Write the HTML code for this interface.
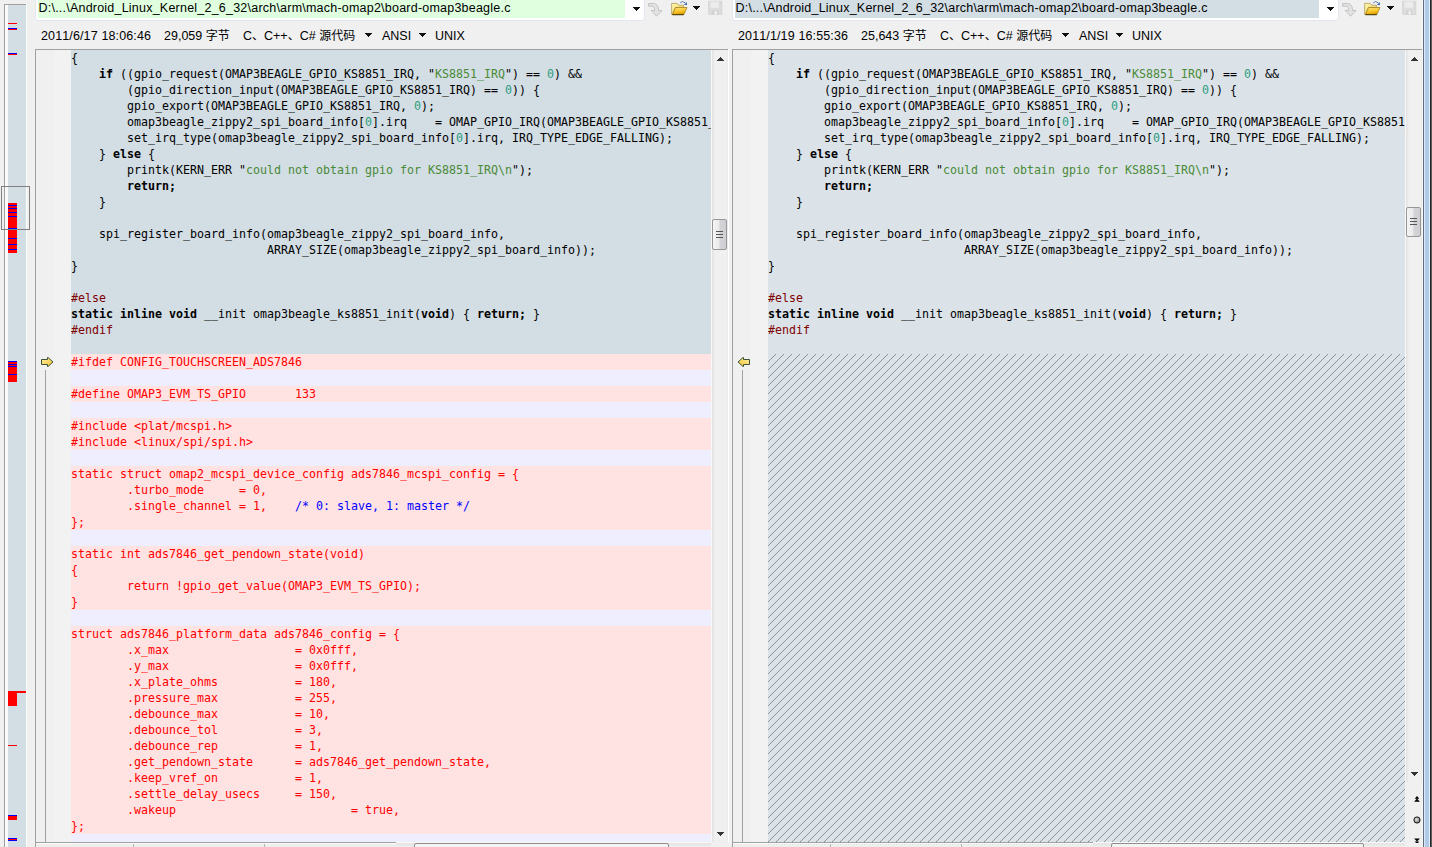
<!DOCTYPE html>
<html lang="zh-CN">
<head>
<meta charset="utf-8">
<title>board-omap3beagle.c</title>
<style>
html,body{margin:0;padding:0}
body{width:1432px;height:847px;overflow:hidden;background:#f0f0f0;position:relative;
  font-family:"Liberation Sans","Noto Sans CJK SC",sans-serif;font-size:12px;color:#000}
.abs{position:absolute}
/* ---------- overview strip ---------- */
#ov{left:4px;top:4px;width:23px;height:843px}
#ov .bl{left:0;top:0;width:1px;height:843px;background:#a0a0a0}
#ov .bt{left:0;top:0;width:22px;height:1px;background:#a0a0a0}
#ov .wh{left:1px;top:1px;width:3px;height:842px;background:#fafafa}
#ov .bg{left:4px;top:1px;width:18px;height:842px;background:#d2dde4}
#ov .wr{left:22px;top:0;width:1px;height:843px;background:#fcfcfc}
.m{position:absolute;left:8px;width:9px}
.red{background:#ff0000}.blu{background:#0000ff}
#vp{left:1px;top:186px;width:27px;height:42px;border:1px solid #808080}
/* ---------- header ---------- */
.pbox{top:-1px;height:20px;background:#fff;border:1px solid #e3e6ef;border-radius:0 0 3px 3px}
.phl{top:0;height:18px}
.ptxt{top:0;height:16px;line-height:16px;white-space:pre;font-size:12.5px;letter-spacing:0.22px;font-kerning:none}
.tri{width:0;height:0;border-left:3.8px solid transparent;border-right:3.8px solid transparent;border-top:4.4px solid #000;margin-left:-0.4px}
.info{top:28px;height:16px;line-height:16px;white-space:pre;font-size:12.5px;font-kerning:none}
.info u{text-decoration:none;font-size:12px}
/* ---------- panes ---------- */
.pane{top:49px;height:794px;overflow:hidden}
.pane .bt{left:0;top:0;height:1px;background:#a0a0a0}
.pane .bl{left:0;top:0;width:1px;height:794px;background:#a0a0a0}
.pane .bb{left:0;top:793px;height:1px;background:#a0a0a0}
.gut{left:1px;top:1px;width:35px;height:792px;background:linear-gradient(90deg,#f0f0f0 0,#f0f0f0 18px,#f2f2f2 18px,#f2f2f2 100%)}
.vline{width:1px;background:#a0a0a0}
.code{left:36px;top:1px;height:792px;overflow:hidden;background:#d2dde4;
  font-family:"DejaVu Sans Mono","Liberation Mono",monospace;font-size:11.64px;line-height:16px;color:#000}
.r{height:16px;white-space:pre;padding-top:0}
.r.d{background:#ffe3e3;color:#ff0000}
.r.l{background:#eeeeff}
.r b{font-weight:bold}
.n{color:#2e9e80}.s{color:#4a8a38}.p{color:#800000}.c{color:#0000ff}
.hatch{background-color:#dbe3e8;background-image:repeating-linear-gradient(135deg,transparent 0,transparent 4.95px,#8a949c 4.95px,#8a949c 5.66px)}
.sb{top:1px;width:17px;background:linear-gradient(90deg,#f8f8f8 0,#f8f8f8 1px,#e3e3e3 1px,#e3e3e3 2px,#e9e9e9 2px,#e9e9e9 3px,#eeeeee 3px,#eeeeee 4px,#f0f0f0 4px,#f0f0f0 16px,#ebebeb 16px,#ebebeb 17px)}
.thumb{left:1px;width:13px;border:1px solid #979797;border-radius:2px;background:linear-gradient(90deg,#f5f5f5 0,#e9e9eb 48%,#d4d4d8 52%,#cfcfd3 100%)}
.thumb i{position:absolute;left:3px;width:7px;height:1px;background:#555}
.up{width:0;height:0;border-left:4px solid transparent;border-right:4px solid transparent;border-bottom:4.5px solid #383838;margin-left:-0.5px}
.dn{width:0;height:0;border-left:4px solid transparent;border-right:4px solid transparent;border-top:4.5px solid #383838;margin-left:-0.5px}
</style>
</head>
<body>

<!-- overview strip -->
<div id="ov" class="abs">
  <div class="abs bg"></div><div class="abs wh"></div>
  <div class="abs bl"></div><div class="abs bt"></div><div class="abs wr"></div>
</div>
<div class="m red" style="top:23px;height:1px"></div>
<div class="m blu" style="top:28px;height:1px"></div><div class="m red" style="top:29px;height:1px"></div>
<div class="m blu" style="top:53px;height:1px"></div><div class="m red" style="top:54px;height:1px"></div>
<div class="m red" style="top:203px;height:50px"></div>
<div class="m blu" style="top:205px;height:1px"></div>
<div class="m blu" style="top:208px;height:1px"></div>
<div class="m blu" style="top:212px;height:1px"></div>
<div class="m blu" style="top:216px;height:1px"></div>
<div class="m blu" style="top:228px;height:1px"></div>
<div class="m blu" style="top:238px;height:1px"></div>
<div class="m blu" style="top:244px;height:1px"></div>
<div class="m blu" style="top:249px;height:1px"></div>
<div class="m red" style="top:361px;height:21px"></div>
<div class="m blu" style="top:361px;height:1px"></div>
<div class="m blu" style="top:364px;height:1px"></div>
<div class="m blu" style="top:366px;height:1px"></div>
<div class="m blu" style="top:374px;height:1px"></div>
<div class="m red" style="top:691px;height:15px"></div>
<div class="m red" style="top:691px;height:2px;width:18px"></div>
<div class="m red" style="top:745px;height:1px"></div>
<div class="m blu" style="top:815px;height:1px"></div><div class="m red" style="top:816px;height:4px"></div>
<div class="m blu" style="top:838px;height:1px"></div><div class="m red" style="top:839px;height:1px"></div><div class="m blu" style="top:840px;height:1px"></div>
<div id="vp" class="abs"></div>

<!-- left header -->
<div class="abs pbox" style="left:35px;width:608px"></div>
<div class="abs phl" style="left:38px;width:587px;background:#dfffdf"></div>
<div class="abs ptxt" id="pl" style="left:38.5px">D:\...\Android_Linux_Kernel_2_6_32\arch\arm\mach-omap2\board-omap3beagle.c</div>
<svg class="abs" style="left:633px;top:7px" width="7" height="4" fill="#111"><use href="#tdn"/></svg>
<svg class="abs" style="left:693px;top:6px" width="7" height="4" fill="#111"><use href="#tdn"/></svg>
<div class="abs info" style="left:41px;letter-spacing:0.13px" id="il1">2011/6/17 18:06:46</div>
<div class="abs info" style="left:164px" id="il2">29,059 <u>字节</u></div>
<div class="abs info" style="left:243px" id="il3">C<u>、</u>C++<u>、</u>C# <u>源代码</u></div>
<svg class="abs" style="left:365px;top:33px" width="7" height="4" fill="#111"><use href="#tdn"/></svg>
<div class="abs info" style="left:382px" id="il4">ANSI</div>
<svg class="abs" style="left:419px;top:33px" width="7" height="4" fill="#111"><use href="#tdn"/></svg>
<div class="abs info" style="left:435px" id="il5">UNIX</div>

<!-- right header -->
<div class="abs pbox" style="left:732px;width:605px"></div>
<div class="abs phl" style="left:735px;width:584px;background:#d2dde4"></div>
<div class="abs ptxt" id="pr" style="left:735.5px">D:\...\Android_Linux_Kernel_2_6_32\arch\arm\mach-omap2\board-omap3beagle.c</div>
<svg class="abs" style="left:1327px;top:7px" width="7" height="4" fill="#111"><use href="#tdn"/></svg>
<svg class="abs" style="left:1387px;top:6px" width="7" height="4" fill="#111"><use href="#tdn"/></svg>
<div class="abs info" style="left:738px;letter-spacing:0.13px" id="ir1">2011/1/19 16:55:36</div>
<div class="abs info" style="left:861px" id="ir2">25,643 <u>字节</u></div>
<div class="abs info" style="left:940px" id="ir3">C<u>、</u>C++<u>、</u>C# <u>源代码</u></div>
<svg class="abs" style="left:1062px;top:33px" width="7" height="4" fill="#111"><use href="#tdn"/></svg>
<div class="abs info" style="left:1079px" id="ir4">ANSI</div>
<svg class="abs" style="left:1116px;top:33px" width="7" height="4" fill="#111"><use href="#tdn"/></svg>
<div class="abs info" style="left:1132px" id="ir5">UNIX</div>

<!-- left pane -->
<div class="abs pane" style="left:35px;width:693px">
  <div class="abs gut"></div>
  <div class="abs code" style="width:640px">
<div class="r">{</div>
<div class="r">    <b>if</b> ((gpio_request(OMAP3BEAGLE_GPIO_KS8851_IRQ, "<span class="s">KS8851_IRQ</span>") == <span class="n">0</span>) &amp;&amp;</div>
<div class="r">        (gpio_direction_input(OMAP3BEAGLE_GPIO_KS8851_IRQ) == <span class="n">0</span>)) {</div>
<div class="r">        gpio_export(OMAP3BEAGLE_GPIO_KS8851_IRQ, <span class="n">0</span>);</div>
<div class="r">        omap3beagle_zippy2_spi_board_info[<span class="n">0</span>].irq    = OMAP_GPIO_IRQ(OMAP3BEAGLE_GPIO_KS8851_IRQ);</div>
<div class="r">        set_irq_type(omap3beagle_zippy2_spi_board_info[<span class="n">0</span>].irq, IRQ_TYPE_EDGE_FALLING);</div>
<div class="r">    } <b>else</b> {</div>
<div class="r">        printk(KERN_ERR "<span class="s">could not obtain gpio for KS8851_IRQ\n</span>");</div>
<div class="r">        <b>return</b><b>;</b></div>
<div class="r">    }</div>
<div class="r"></div>
<div class="r">    spi_register_board_info(omap3beagle_zippy2_spi_board_info,</div>
<div class="r">                            ARRAY_SIZE(omap3beagle_zippy2_spi_board_info));</div>
<div class="r">}</div>
<div class="r"></div>
<div class="r"><span class="p">#else</span></div>
<div class="r"><b>static inline void</b> __init omap3beagle_ks8851_init(<b>void</b>) { <b>return</b><b>;</b> }</div>
<div class="r"><span class="p">#endif</span></div>
<div class="r"></div>
<div class="r d">#ifdef CONFIG_TOUCHSCREEN_ADS7846</div>
<div class="r l"></div>
<div class="r d">#define OMAP3_EVM_TS_GPIO       133</div>
<div class="r l"></div>
<div class="r d">#include &lt;plat/mcspi.h&gt;</div>
<div class="r d">#include &lt;linux/spi/spi.h&gt;</div>
<div class="r l"></div>
<div class="r d">static struct omap2_mcspi_device_config ads7846_mcspi_config = {</div>
<div class="r d">        .turbo_mode     = 0,</div>
<div class="r d">        .single_channel = 1,    <span class="c">/* 0: slave, 1: master */</span></div>
<div class="r d">};</div>
<div class="r l"></div>
<div class="r d">static int ads7846_get_pendown_state(void)</div>
<div class="r d">{</div>
<div class="r d">        return !gpio_get_value(OMAP3_EVM_TS_GPIO);</div>
<div class="r d">}</div>
<div class="r l"></div>
<div class="r d">struct ads7846_platform_data ads7846_config = {</div>
<div class="r d">        .x_max                  = 0x0fff,</div>
<div class="r d">        .y_max                  = 0x0fff,</div>
<div class="r d">        .x_plate_ohms           = 180,</div>
<div class="r d">        .pressure_max           = 255,</div>
<div class="r d">        .debounce_max           = 10,</div>
<div class="r d">        .debounce_tol           = 3,</div>
<div class="r d">        .debounce_rep           = 1,</div>
<div class="r d">        .get_pendown_state      = ads7846_get_pendown_state,</div>
<div class="r d">        .keep_vref_on           = 1,</div>
<div class="r d">        .settle_delay_usecs     = 150,</div>
<div class="r d">        .wakeup                         = true,</div>
<div class="r d">};</div>
<div class="r l"></div>
  </div>
  <div class="abs vline" style="left:10px;top:321px;height:472px"></div>
  <div class="abs sb" style="left:676px;height:792px">
    <svg class="abs" style="left:6px;top:7px" width="7" height="4" fill="#333"><use href="#tup"/></svg>
    <div class="abs thumb" style="top:169px;height:29px"><i style="top:11px"></i><i style="top:14px"></i><i style="top:17px"></i></div>
    <svg class="abs" style="left:6px;top:782px" width="7" height="4" fill="#333"><use href="#tdn"/></svg>
  </div>
  <div class="abs bt" style="width:693px"></div><div class="abs bl"></div><div class="abs bb" style="width:361px"></div>
</div>

<!-- right pane -->
<div class="abs pane" style="left:732px;width:690px">
  <div class="abs gut"></div>
  <div class="abs code" style="width:637px;background:#dbe3e8">
<div class="r">{</div>
<div class="r">    <b>if</b> ((gpio_request(OMAP3BEAGLE_GPIO_KS8851_IRQ, "<span class="s">KS8851_IRQ</span>") == <span class="n">0</span>) &amp;&amp;</div>
<div class="r">        (gpio_direction_input(OMAP3BEAGLE_GPIO_KS8851_IRQ) == <span class="n">0</span>)) {</div>
<div class="r">        gpio_export(OMAP3BEAGLE_GPIO_KS8851_IRQ, <span class="n">0</span>);</div>
<div class="r">        omap3beagle_zippy2_spi_board_info[<span class="n">0</span>].irq    = OMAP_GPIO_IRQ(OMAP3BEAGLE_GPIO_KS8851_IRQ);</div>
<div class="r">        set_irq_type(omap3beagle_zippy2_spi_board_info[<span class="n">0</span>].irq, IRQ_TYPE_EDGE_FALLING);</div>
<div class="r">    } <b>else</b> {</div>
<div class="r">        printk(KERN_ERR "<span class="s">could not obtain gpio for KS8851_IRQ\n</span>");</div>
<div class="r">        <b>return</b><b>;</b></div>
<div class="r">    }</div>
<div class="r"></div>
<div class="r">    spi_register_board_info(omap3beagle_zippy2_spi_board_info,</div>
<div class="r">                            ARRAY_SIZE(omap3beagle_zippy2_spi_board_info));</div>
<div class="r">}</div>
<div class="r"></div>
<div class="r"><span class="p">#else</span></div>
<div class="r"><b>static inline void</b> __init omap3beagle_ks8851_init(<b>void</b>) { <b>return</b><b>;</b> }</div>
<div class="r"><span class="p">#endif</span></div>
<div class="r"></div>
<div class="hatch" style="height:488px"></div>
  </div>
  <div class="abs vline" style="left:10px;top:321px;height:472px"></div>
  <div class="abs sb" style="left:673px;height:732px">
    <svg class="abs" style="left:6px;top:7px" width="7" height="4" fill="#333"><use href="#tup"/></svg>
    <div class="abs thumb" style="top:157px;height:28px"><i style="top:10px"></i><i style="top:13px"></i><i style="top:16px"></i></div>
    <svg class="abs" style="left:6px;top:722px" width="7" height="4" fill="#333"><use href="#tdn"/></svg>
  </div>
  <div class="abs bt" style="width:690px"></div><div class="abs bl"></div><div class="abs bb" style="width:361px"></div>
</div>


<!-- icon symbols -->
<svg width="0" height="0" style="position:absolute">
  <defs>
    <linearGradient id="gy" x1="0" y1="0" x2="1" y2="1"><stop offset="0" stop-color="#fff0a0"/><stop offset="1" stop-color="#f2c230"/></linearGradient>
    <linearGradient id="gf" x1="0" y1="0" x2="0.3" y2="1"><stop offset="0" stop-color="#ffe680"/><stop offset="0.7" stop-color="#f8c020"/><stop offset="1" stop-color="#d89c00"/></linearGradient>
    <linearGradient id="gb" x1="0" y1="0" x2="1" y2="1"><stop offset="0" stop-color="#fff8b0"/><stop offset="1" stop-color="#f0d060"/></linearGradient>
    <radialGradient id="gc" cx="0.4" cy="0.4" r="0.6"><stop offset="0" stop-color="#e8e8e8"/><stop offset="1" stop-color="#7a7a7a"/></radialGradient>
    <symbol id="tdn" viewBox="0 0 7 4"><path d="M0,0h7v1h-1v1h-1v1h-1v1h-1v-1h-1v-1h-1v-1h-1z" shape-rendering="crispEdges"/></symbol>
    <symbol id="tup" viewBox="0 0 7 4"><path d="M3,0h1v1h1v1h1v1h1v1h-7v-1h1v-1h1v-1h1z" shape-rendering="crispEdges"/></symbol>
    <symbol id="arrR" viewBox="0 0 14 12">
      <path d="M1.5,3.5 H7.5 V1.5 H8 L13,6 L8,10.5 H7.5 V8.5 H1.5 Z" fill="url(#gy)" stroke="#3c5238" stroke-width="1" stroke-linejoin="miter"/>
    </symbol>
    <symbol id="curve" viewBox="0 0 16 15">
      <path d="M0.5,0.5 H5.5 Q10.5,0.8 10.6,7.5 H14 L8.6,13.2 L3.2,7.5 H6.6 Q6.6,3.2 4.2,3.2 H0.5 Z" fill="#e2e2e2" stroke="#bebebe" stroke-width="0.9"/>
    </symbol>
    <symbol id="folder" viewBox="0 0 17 16">
      <path d="M0.6,3.4 H6.2 L7.6,5.2 H12.4 V7.4 H4.4 L1.4,14.4 H0.6 Z" fill="url(#gb)" stroke="#b09c58" stroke-width="0.8"/>
      <path d="M4.6,7.5 H16 L12.8,14.6 H1.4 Z" fill="url(#gf)" stroke="#a88418" stroke-width="0.8"/>
      <path d="M1.4,14.7 H12.8" stroke="#3a2c00" stroke-width="0.9"/>
      <path d="M9.2,2.8 Q11.4,0.3 14.2,2.8" fill="none" stroke="#4a70b0" stroke-width="0.9"/>
      <path d="M15.9,1.9 V4.9 H12.9 Z" fill="#3560a6"/>
    </symbol>
    <symbol id="floppy" viewBox="0 0 15 15">
      <path d="M0.5,1.2 H13.9 V14.7 H1.4 L0.5,13.8 Z" fill="#dcdcdc" stroke="#d0d0d0" stroke-width="0.6"/>
      <rect x="2.6" y="1.6" width="8.4" height="6.4" fill="#ececec" stroke="#e2e2e2" stroke-width="0.5"/>
      <rect x="4.2" y="10.4" width="5.6" height="4.1" fill="#d2d2d2"/>
      <rect x="6.6" y="11.2" width="2.2" height="3.2" fill="#f4f4f4"/>
      <rect x="12" y="2.6" width="1" height="1" fill="#c8c8c8"/>
    </symbol>
    <symbol id="prevd" viewBox="0 0 7 7">
      <path d="M3.5,0 L6.2,3.1 H0.8 Z M3.5,2.9 L6.9,6.6 H0.1 Z" fill="#000"/>
    </symbol>
    <symbol id="nextd" viewBox="0 0 7 7">
      <path d="M3.5,7 L6.2,3.9 H0.8 Z M3.5,4.1 L6.9,0.4 H0.1 Z" fill="#000"/>
    </symbol>
    <symbol id="circ" viewBox="0 0 8 8">
      <circle cx="4" cy="4" r="3.1" fill="url(#gc)" stroke="#000" stroke-width="0.9"/>
    </symbol>
  </defs>
</svg>
<!-- toolbar icons left -->
<svg class="abs" style="left:648px;top:3px" width="16" height="15"><use href="#curve"/></svg>
<svg class="abs" style="left:671px;top:0px" width="17" height="16"><use href="#folder"/></svg>
<svg class="abs" style="left:708px;top:0px" width="15" height="15"><use href="#floppy"/></svg>
<!-- toolbar icons right -->
<svg class="abs" style="left:1342px;top:3px" width="16" height="15"><use href="#curve"/></svg>
<svg class="abs" style="left:1364px;top:0px" width="17" height="16"><use href="#folder"/></svg>
<svg class="abs" style="left:1402px;top:0px" width="15" height="15"><use href="#floppy"/></svg>
<!-- gutter arrows -->
<svg class="abs" style="left:40px;top:356px" width="14" height="12"><use href="#arrR"/></svg>
<svg class="abs" style="left:737px;top:356px;transform:scaleX(-1)" width="14" height="12"><use href="#arrR"/></svg>
<!-- nav icons bottom right -->
<svg class="abs" style="left:1413.5px;top:796px" width="6" height="6.2" preserveAspectRatio="none"><use href="#prevd"/></svg>
<svg class="abs" style="left:1412.6px;top:815.5px" width="8" height="8"><use href="#circ"/></svg>
<svg class="abs" style="left:1413.5px;top:837.8px" width="6" height="6.2" preserveAspectRatio="none"><use href="#nextd"/></svg>


<!-- bottom strips -->
<div class="abs" style="left:36px;top:843px;width:360px;height:1px;background:#fdfdfd"></div>
<div class="abs" style="left:36px;top:844px;width:360px;height:3px;background:#f0eded"></div>
<div class="abs" style="left:133px;top:844px;width:1px;height:3px;background:#b4b4b4"></div>
<div class="abs" style="left:264px;top:844px;width:1px;height:3px;background:#b4b4b4"></div>
<div class="abs" style="left:396px;top:843px;width:315px;height:4px;background:linear-gradient(180deg,#e4e4e4,#eeeeee)"></div>
<div class="abs" style="left:414px;top:843px;width:253px;height:6px;border:1px solid #8e8e8e;border-radius:2px;background:#f4f4f4"></div>
<div class="abs" style="left:711px;top:843px;width:17px;height:4px;background:#f0f0f0"></div>

<div class="abs" style="left:733px;top:843px;width:360px;height:1px;background:#fdfdfd"></div>
<div class="abs" style="left:733px;top:844px;width:360px;height:3px;background:#f0eded"></div>
<div class="abs" style="left:830px;top:844px;width:1px;height:3px;background:#b4b4b4"></div>
<div class="abs" style="left:961px;top:844px;width:1px;height:3px;background:#b4b4b4"></div>
<div class="abs" style="left:1093px;top:843px;width:312px;height:4px;background:linear-gradient(180deg,#e4e4e4,#eeeeee)"></div>
<div class="abs" style="left:1111px;top:843px;width:251px;height:6px;border:1px solid #8e8e8e;border-radius:2px;background:#f4f4f4"></div>
<div class="abs" style="left:1405px;top:843px;width:17px;height:4px;background:#f0f0f0"></div>
<div class="abs" style="left:35px;top:843px;width:1px;height:4px;background:#a0a0a0"></div>
<div class="abs" style="left:732px;top:843px;width:1px;height:4px;background:#a0a0a0"></div>

<div class="abs" style="left:728px;top:49px;width:1px;height:794px;background:#ffffff"></div>
<div class="abs" style="left:396px;top:842px;width:315px;height:1px;background:#f8f8f8"></div>
<div class="abs" style="left:1093px;top:842px;width:312px;height:1px;background:#f8f8f8"></div>
<!-- window right edge -->
<div class="abs" style="left:1422px;top:0;width:1px;height:847px;background:#f8f8f8"></div>
<div class="abs" style="left:1423px;top:0;width:1px;height:847px;background:#5f6d7c"></div>
<div class="abs" style="left:1424px;top:0;width:1px;height:847px;background:#dbe8f6"></div>
<div class="abs" style="left:1425px;top:0;width:4px;height:847px;background:#afcbe7"></div>
<div class="abs" style="left:1429px;top:0;width:1px;height:847px;background:#e6f0fa"></div>
<div class="abs" style="left:1430px;top:0;width:1px;height:847px;background:#23272c"></div>
<div class="abs" style="left:1431px;top:0;width:1px;height:847px;background:#5b5b5b"></div>

</body>
</html>
